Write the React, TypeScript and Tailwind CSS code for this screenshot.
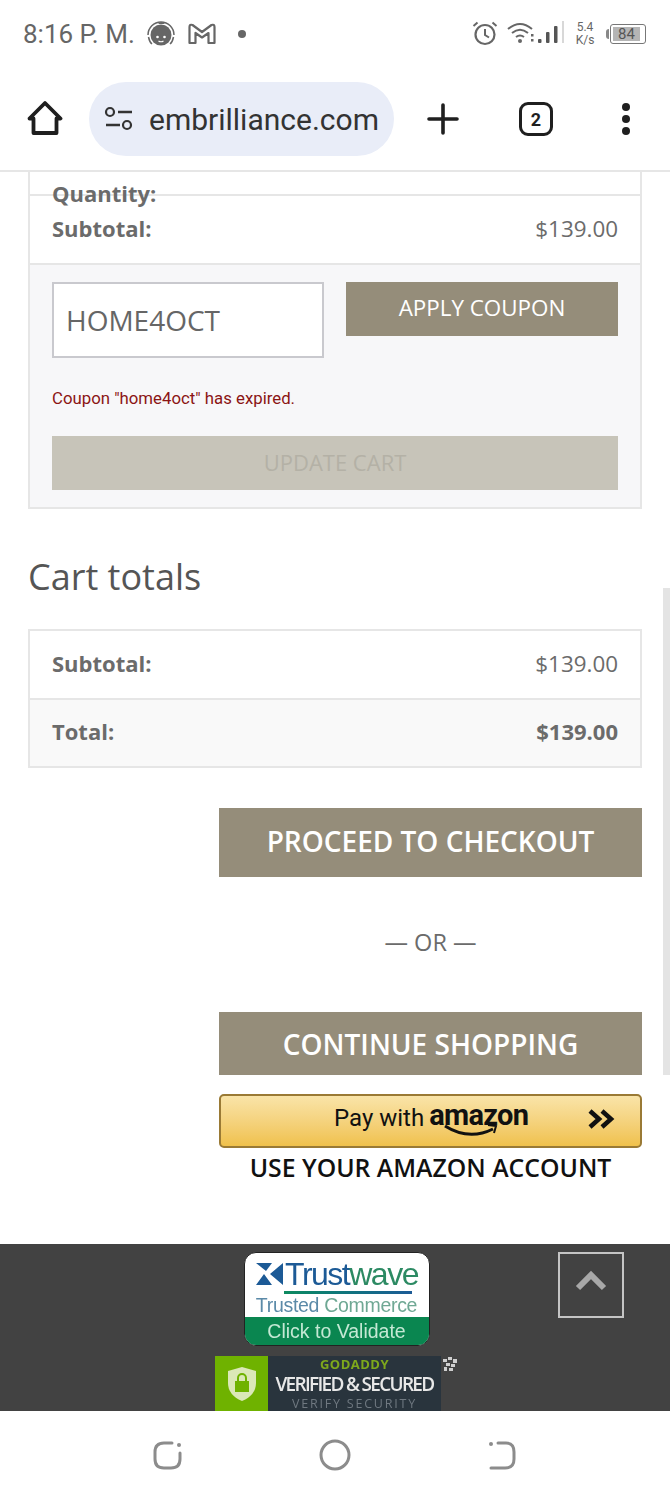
import React from 'react'

const openSans = "font-['Open_Sans',sans-serif]"

const StatusBar = () => (
  <div className="h-[68px] flex items-center justify-between pl-[23px] pr-[24px] text-[#666] bg-white">
    <div className="flex items-center">
      <span className="font-['Roboto',sans-serif] text-[26px] w-[122px] whitespace-nowrap">8:16 P. M.</span>
      <svg width="30" height="30" viewBox="0 0 30 30" className="ml-[1px] -mt-[1px]">
        <path d="M2 16a13 13 0 0 1 26 0" fill="none" stroke="#666" strokeWidth="1.500" />
        <path d="M2.500 18q1 5 3.500 7M27.500 18q-1 5-3.500 7" fill="none" stroke="#666" strokeWidth="1.500" />
        <circle cx="15" cy="16" r="10.500" fill="#666" />
        <path d="M12 5q3-4 7 0" fill="#666" />
        <circle cx="11.500" cy="18" r="1.300" fill="#fff" />
        <circle cx="18.500" cy="18" r="1.300" fill="#fff" />
        <path d="M12.500 22q2.500 1.500 5 0" fill="none" stroke="#fff" strokeWidth="1.200" />
      </svg>
      <svg width="30" height="24" viewBox="0 0 30 24" className="ml-[11px] -mt-[1px]">
        <path d="M2.500 21V5q0-3 3-2l9.500 7 9.500-7q3-1 3 2v16h-6V11l-6.500 4.500L8.500 11v10z" fill="none" stroke="#666" strokeWidth="2.200" strokeLinejoin="round" />
      </svg>
      <span className="w-[8px] h-[8px] rounded-full bg-[#666] ml-[21px] -mt-[1px]" />
    </div>
    <div className="flex items-center">
      <svg width="28" height="28" viewBox="0 0 28 28" className="-mt-[3px]">
        <circle cx="14" cy="15.500" r="9.500" fill="none" stroke="#666" strokeWidth="2.200" />
        <path d="M14 10v6l4 2.500" fill="none" stroke="#666" strokeWidth="2" />
        <path d="M2.500 7l4-3.500M25.500 7l-4-3.500" stroke="#666" strokeWidth="2" />
      </svg>
      <svg width="58" height="26" viewBox="0 0 58 26" className="ml-[7px] -mt-[3px]">
        <path d="M2 9q12-10 24 0M6 13q8-6.500 16 0M10 17q4-3 8 0" fill="none" stroke="#666" strokeWidth="2" />
        <circle cx="14" cy="21" r="2" fill="#666" />
        <rect x="25" y="14" width="2.500" height="2.500" fill="#666" />
        <rect x="25" y="19" width="2.500" height="2.500" fill="#666" />
        <rect x="32" y="19" width="3.500" height="4" rx="1" fill="#555" />
        <rect x="40" y="12" width="3.500" height="11" rx="1" fill="#555" />
        <rect x="48" y="6" width="3.500" height="17" rx="1" fill="#555" />
        <rect x="56" y="1" width="2" height="22" fill="#d8d8d8" />
      </svg>
      <div className="font-['Roboto',sans-serif] text-[12px] leading-[13px] text-center ml-[11px] w-[20px] text-[#666]">
        <div>5.4</div>
        <div>K/s</div>
      </div>
      <div className="w-[3px] h-[10px] bg-[#888] ml-[11px] rounded-l-sm" />
      <div className="w-[36px] h-[20px] border-[1.5px] border-[#777] rounded-[3px] ml-[1px] p-[2px] flex">
        <div className="bg-[#b5b5b5] w-[27px] h-full flex items-center justify-center font-['Roboto',sans-serif] text-[15px] text-[#555]">84</div>
      </div>
    </div>
  </div>
)

const BrowserBar = () => (
  <div className="h-[104px] bg-white border-b-2 border-[#e6e6e6] flex items-start pt-[14px] pl-[27px] text-[#1f1f1f]">
    <svg width="36" height="36" viewBox="0 0 36 36" className="mt-[18px] shrink-0">
      <path d="M2.500 18.500 18 3l15.500 15.500h-4V33H6.500V18.500z" fill="none" stroke="#1f1f1f" strokeWidth="3.800" strokeLinejoin="round" />
    </svg>
    <div className="ml-[26px] w-[305px] h-[74px] rounded-[37px] bg-[#e9edf8] flex items-center pl-[15px] shrink-0">
      <svg width="30" height="26" viewBox="0 0 30 26" className="shrink-0">
        <circle cx="6" cy="6" r="4" fill="none" stroke="#333" strokeWidth="2.200" />
        <path d="M14 6h14M2 19h14" stroke="#333" strokeWidth="2.600" />
        <circle cx="23" cy="19" r="4" fill="none" stroke="#333" strokeWidth="2.200" />
      </svg>
      <span className="font-['Roboto',sans-serif] text-[30px] ml-[15px] w-[231px] overflow-hidden whitespace-nowrap text-[#333]">embrilliance.com</span>
    </div>
    <svg width="32" height="32" viewBox="0 0 32 32" className="ml-[33px] mt-[21px] shrink-0">
      <path d="M16 2v28M2 16h28" stroke="#1f1f1f" strokeWidth="3.600" strokeLinecap="round" />
    </svg>
    <div className="ml-[60px] mt-[20px] w-[34px] h-[34px] border-[3.500px] border-[#1f1f1f] rounded-[9px] flex items-center justify-center font-['Roboto',sans-serif] font-bold text-[18px] shrink-0">2</div>
    <div className="ml-[69px] mt-[21px] flex flex-col gap-[4px] shrink-0">
      <span className="w-[8px] h-[8px] rounded-full bg-[#1f1f1f]" />
      <span className="w-[8px] h-[8px] rounded-full bg-[#1f1f1f]" />
      <span className="w-[8px] h-[8px] rounded-full bg-[#1f1f1f]" />
    </div>
  </div>
)

const TopTable = () => (
  <div className="mx-[28px] border-x-2 border-b-2 border-[#e6e6e6]">
    <div className="relative h-[91px] px-[22px] bg-white text-[#6b6b6b] text-[22px] font-bold">
      <div className="absolute left-0 right-0 top-[22px] h-[2px] bg-[#e6e6e6]" />
      <div className="relative h-[43px] leading-[42px]">Quantity:</div>
      <div className="relative flex justify-between leading-[27px]">
        <span>Subtotal:</span>
        <span className="font-normal text-[22.4px]">$139.00</span>
      </div>
    </div>
    <div className="bg-[#f7f7f9] border-t-2 border-[#e6e6e6] px-[22px] pt-[17px] h-[244px]">
      <div className="flex justify-between items-start">
        <div className="w-[272px] h-[76px] bg-white border-2 border-[#c9c9ce] flex items-center pl-[12px] text-[28px] text-[#666]">HOME4OCT</div>
        <div className="w-[272px] h-[54px] bg-[#958d7a] text-white text-[22.4px] flex items-center justify-center pb-[2px]">APPLY COUPON</div>
      </div>
      <div className="font-['Roboto',sans-serif] text-[16.8px] leading-[20px] text-[#8b1414] mt-[30px]">Coupon "home4oct" has expired.</div>
      <div className="mt-[28px] h-[54px] bg-[#c7c4b9] text-[#b4b1a6] text-[22px] flex items-center justify-center pb-[2px]">UPDATE CART</div>
    </div>
  </div>
)

const CartTotals = () => (
  <div className="mx-[28px]">
    <h2 className="text-[36px] leading-[46px] text-[#555] mt-[45px] font-normal">Cart totals</h2>
    <div className="mt-[29px] border-2 border-[#e6e6e6] text-[22.4px] text-[#6b6b6b]">
      <div className="h-[67px] px-[22px] pb-[2px] flex items-center justify-between bg-white">
        <span className="font-bold text-[22px]">Subtotal:</span>
        <span>$139.00</span>
      </div>
      <div className="h-[68px] px-[22px] pb-[3px] flex items-center justify-between bg-[#f9f9f9] border-t-2 border-[#e6e6e6] font-bold text-[22px]">
        <span>Total:</span>
        <span>$139.00</span>
      </div>
    </div>
  </div>
)

const Checkout = () => (
  <div className="ml-[219px] mr-[28px] mt-[40px] h-[407px]">
    <div className="h-[69px] bg-[#958d7a] text-white text-[28px] font-semibold flex items-center justify-center pb-[3px]">PROCEED TO CHECKOUT</div>
    <div className="h-[135px] flex items-center justify-center pb-[4px] text-[23.5px] text-[#6b6b6b]">— OR —</div>
    <div className="h-[63px] bg-[#958d7a] text-white text-[28px] font-semibold flex items-center justify-center">CONTINUE SHOPPING</div>
    <div className="mt-[19px] h-[54px] rounded-[5px] border-2 border-[#9a7a35] bg-gradient-to-b from-[#f9e4a8] to-[#f0c14b] relative flex items-center text-[#111]">
      <span className="ml-[113px] font-['Roboto',sans-serif] text-[24px] -mt-[6px]">Pay with</span>
      <span className="relative ml-[5px] font-['Roboto',sans-serif] font-bold text-[29px] leading-[30px] tracking-[-0.7px] -mt-[12px]">
        amazon
        <svg width="56" height="16" viewBox="0 0 56 16" className="absolute left-[14px] top-[24px]">
          <path d="M2 2q24 15 48 3" fill="none" stroke="#111" strokeWidth="3" />
          <path d="M45 1l8 1-2 7" fill="none" stroke="#111" strokeWidth="2" />
        </svg>
      </span>
      <svg width="28" height="22" viewBox="0 0 28 22" className="absolute left-[366px] top-[12px]">
        <path d="M3 3l9 8-9 8M15 3l9 8-9 8" fill="none" stroke="#111" strokeWidth="4.500" />
      </svg>
    </div>
    <div className="text-center text-[#111] text-[24.8px] font-semibold leading-[38px] whitespace-nowrap -ml-[4px] -mr-[4px]">USE YOUR AMAZON ACCOUNT</div>
  </div>
)

const Footer = () => (
  <div className="h-[167px] mt-[29px] bg-[#424242] relative overflow-hidden flex flex-col items-center">
    <div className="mt-[8px] w-[186px] h-[94px] rounded-[12px] bg-white overflow-hidden flex flex-col ml-[3px] border border-[#222] font-['Liberation_Sans',sans-serif] blur-[0.5px]">
      <div className="h-[67px] flex flex-col items-center pt-[4px]">
        <div className="flex items-center h-[34px]">
          <svg width="30" height="26" viewBox="0 0 30 26">
            <path d="M1 2h16l-6 8zM28 2v22L15 13zM1 24l8-11 8 11z" fill="#1c5a96" />
          </svg>
          <span className="text-[32px] leading-[34px] tracking-[-1.5px] text-[#1c5a96]">Trust</span>
          <span className="text-[32px] leading-[34px] tracking-[-1.5px] text-[#2c8a63]">wave</span>
        </div>
        <div className="w-[128px] h-[3px] bg-gradient-to-r from-[#0e8a5f] to-[#1c5a96] ml-[22px]" />
        <div className="text-[19.5px] leading-[23px] tracking-[-0.3px] whitespace-nowrap">
          <span className="text-[#5b8aa8]">Trusted </span>
          <span className="text-[#6fa894]">Commerce</span>
        </div>
      </div>
      <div className="flex-1 bg-[#0a8650] text-[#c4e8d4] text-[19.5px] flex items-center justify-center pb-[2px]">Click to Validate</div>
    </div>
    <div className="absolute left-[215px] top-[112px] w-[226px] h-[55px] bg-[#29343d] flex blur-[0.4px]">
      <div className="w-[53px] h-full bg-[#6fb200] flex items-center justify-center">
        <svg width="34" height="38" viewBox="0 0 34 38">
          <path d="M17 2l14 4v12q0 12-14 18Q3 30 3 18V6z" fill="#dbe8b8" />
          <rect x="10" y="16" width="14" height="11" fill="#6fb200" />
          <path d="M13 16v-3a4 4 0 0 1 8 0v3" fill="none" stroke="#6fb200" strokeWidth="2" />
        </svg>
      </div>
      <div className="flex-1 flex flex-col items-center font-['Open_Sans',sans-serif]">
        <div className="text-[13px] leading-[14px] mt-[1px] font-bold text-[#7ea81c] tracking-[0.5px]">GODADDY</div>
        <div className="text-[19px] leading-[26px] text-[#e8e8e8] font-semibold tracking-[-1.7px] whitespace-nowrap">VERIFIED &amp; SECURED</div>
        <div className="text-[12.5px] leading-[14px] text-[#6f7880] tracking-[1.8px] whitespace-nowrap">VERIFY SECURITY</div>
      </div>
    </div>
    <svg width="16" height="16" viewBox="0 0 16 16" className="absolute left-[442px] top-[112px]">
      <path d="M1 3h4v3H1zM6 1h4v3H6zM11 3h4v4h-4zM4 7h4v3H4zM9 8h4v3H9zM2 11h3v4H2zM7 12h4v3H7z" fill="#cfcfcf" />
    </svg>
    <div className="absolute left-[558px] top-[8px] w-[66px] h-[66px] border-2 border-[#c4c4c4] flex items-center justify-center">
      <svg width="32" height="22" viewBox="0 0 32 22" className="-mt-[8px]">
        <path d="M3 18 16 5l13 13" fill="none" stroke="#a8a8a8" strokeWidth="6" />
      </svg>
    </div>
  </div>
)

const NavBar = () => (
  <div className="h-[89px] bg-white flex items-start pt-[28px] pl-[152px]">
    <svg width="32" height="32" viewBox="0 0 32 32">
      <path d="M20 4h-8Q3 4 3 13v7q0 9 9 9h7q9 0 9-9v-6" fill="none" stroke="#8c8c8c" strokeWidth="3" strokeLinecap="round" />
      <circle cx="27" cy="6" r="2" fill="#8c8c8c" />
    </svg>
    <svg width="32" height="32" viewBox="0 0 32 32" className="ml-[135px]">
      <circle cx="16" cy="16" r="14" fill="none" stroke="#8c8c8c" strokeWidth="3" />
    </svg>
    <svg width="32" height="32" viewBox="0 0 32 32" className="ml-[135px]">
      <path d="M12 4h8q8 0 8 9v7q0 9-9 9H5" fill="none" stroke="#8c8c8c" strokeWidth="3" strokeLinecap="round" />
      <circle cx="5" cy="5" r="2" fill="#8c8c8c" />
    </svg>
  </div>
)

export default function App() {
  return (
    <div className={`${openSans} w-[670px] h-[1500px] bg-white relative overflow-hidden`}>
      <StatusBar />
      <BrowserBar />
      <TopTable />
      <CartTotals />
      <Checkout />
      <Footer />
      <NavBar />
      <div className="absolute right-0 top-[588px] w-[7px] h-[487px] bg-[#e4e4e4]" />
    </div>
  )
}
